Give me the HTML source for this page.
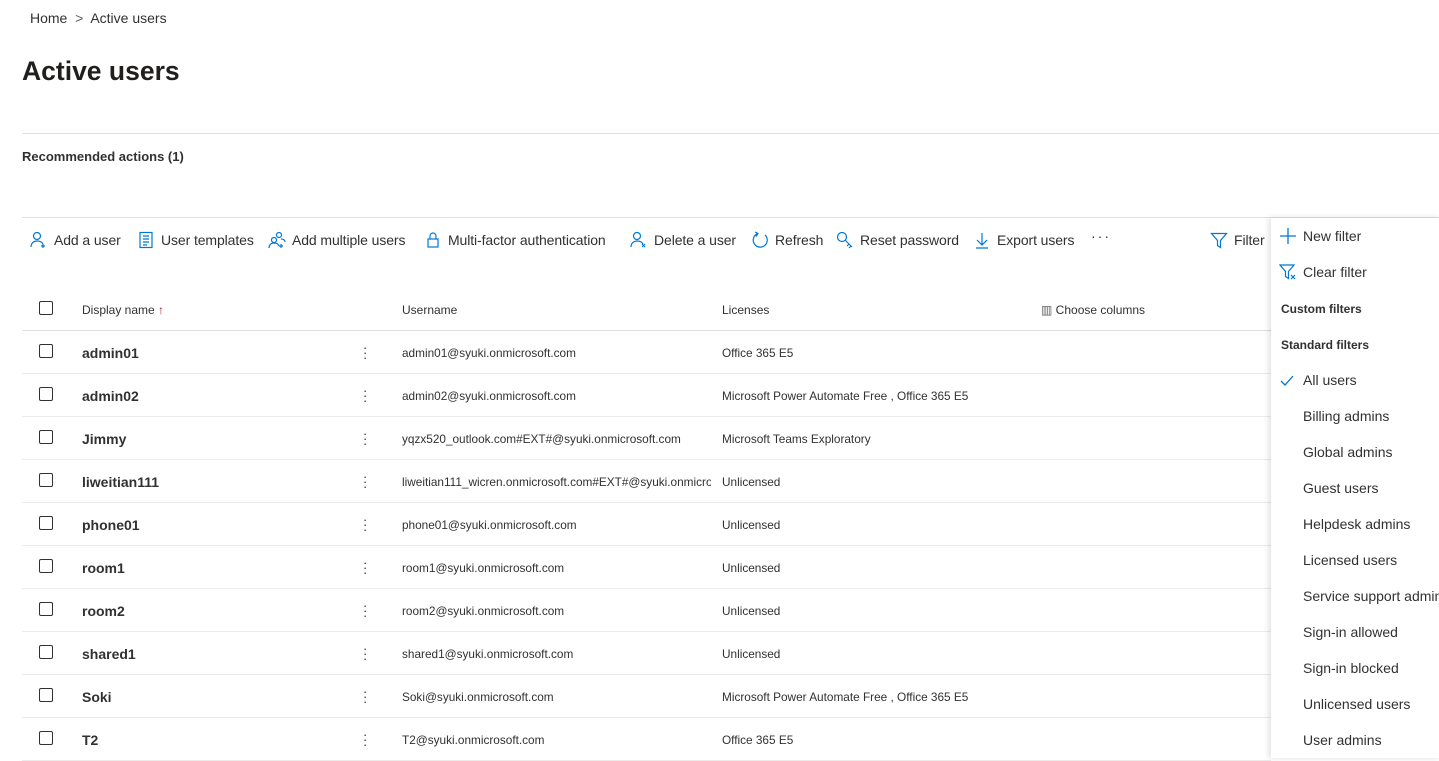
<!DOCTYPE html>
<html><head><meta charset="utf-8"><style>
*{box-sizing:border-box;margin:0;padding:0}
body{width:1439px;height:751px;overflow:hidden;background:#fff;font-family:"Liberation Sans",sans-serif;color:#323130;position:relative}
.abs{position:absolute;white-space:nowrap}
.crumb{top:10px;left:30px;font-size:14px}
h1{position:absolute;top:56px;left:22px;font-size:26.5px;font-weight:700;color:#201f1e}
.hr{position:absolute;left:22px;right:0;height:1px;background:#e1dfdd}
.tb{top:231px;font-size:14px;display:flex;align-items:center;gap:6px;letter-spacing:-0.1px}
.tb svg{width:18px;height:18px;fill:none;stroke:#0078d4;stroke-width:1.2}
.th{top:303px;font-size:12px}
.row{position:absolute;left:22px;width:1249px;height:43px;border-bottom:1px solid #edebe9}
.cb{position:absolute;left:17px;width:14px;height:14px;border:1px solid #323130;border-radius:2px}
.nm{position:absolute;left:60px;font-size:14px;font-weight:700;color:#323130}
.dots{position:absolute;left:341px;font-size:13px;line-height:5px;color:#323130}
.un{position:absolute;left:380px;font-size:11.8px;width:309px;overflow:hidden}
.lic{position:absolute;left:700px;font-size:11.8px}
.menu{position:absolute;left:1271px;top:218px;width:170px;height:540px;background:#fff;box-shadow:-2px 0 6px rgba(0,0,0,.13)}
.mi{position:absolute;left:32px;font-size:14px;color:#323130;white-space:nowrap}
.mh{position:absolute;left:10px;font-size:12px;font-weight:700;color:#323130}
</style></head><body>
<div class="abs crumb">Home &nbsp;<span style="color:#605e5c">&gt;</span>&nbsp; Active users</div>
<h1>Active users</h1>
<div class="hr" style="top:133px"></div>
<div class="abs" style="top:149px;left:22px;font-size:13px;font-weight:700">Recommended actions (1)</div>
<div class="hr" style="top:217px"></div>

<div class="abs tb" style="left:30px"><svg viewBox="0 0 18 18"><circle cx="7" cy="5" r="3.5"/><path d="M1 16c0-4 3-6 6-6s5 1 6 3M13 13v4M11 15h4"/></svg>Add a user</div>
<div class="abs tb" style="left:137px"><svg viewBox="0 0 18 18"><rect x="3" y="1.5" width="12" height="15"/><path d="M6 5h6M6 8h6M6 11h6M6 14h4"/></svg>User templates</div>
<div class="abs tb" style="left:268px"><svg viewBox="0 0 18 18"><circle cx="11" cy="4" r="2.5"/><circle cx="6" cy="9" r="2.5"/><path d="M1 17c0-3 2-5 5-5s4 1 5 3M13 13v4M11 15h4M13 8c2 0 4 1 4 3"/></svg>Add multiple users</div>
<div class="abs tb" style="left:424px"><svg viewBox="0 0 18 18"><rect x="4" y="8" width="10" height="8"/><path d="M6 8V5a3 3 0 016 0v3"/></svg>Multi-factor authentication</div>
<div class="abs tb" style="left:630px"><svg viewBox="0 0 18 18"><circle cx="7" cy="5" r="3.5"/><path d="M1 16c0-4 3-6 6-6s5 1 6 3M12 13l3 3M15 13l-3 3"/></svg>Delete a user</div>
<div class="abs tb" style="left:751px"><svg viewBox="0 0 18 18"><path d="M14 4a7 7 0 11-7-1.5M4 1l3 1.5-2 3"/></svg>Refresh</div>
<div class="abs tb" style="left:836px"><svg viewBox="0 0 18 18"><circle cx="6" cy="6" r="4.5"/><path d="M9 9l7 7M13 13l-2 2M15 15l-2 2"/></svg>Reset password</div>
<div class="abs tb" style="left:973px"><svg viewBox="0 0 18 18"><path d="M9 2v12M4 9l5 5 5-5M3 17h12"/></svg>Export users</div>
<div class="abs" style="left:1091px;top:228px;font-size:14px;letter-spacing:2px">···</div>
<div class="abs tb" style="left:1210px"><svg viewBox="0 0 18 18"><path d="M1.5 2.5h15l-6 7v7l-3-2v-5z"/></svg>Filter</div>

<div class="cb" style="top:301px;left:39px;position:absolute"></div>
<div class="abs th" style="left:82px">Display name <span style="color:#a4262c">↑</span></div>
<div class="abs th" style="left:402px">Username</div>
<div class="abs th" style="left:722px">Licenses</div>
<div class="abs th" style="left:1041px"><span style="color:#605e5c">▥</span> Choose columns</div>
<div class="hr" style="top:330px;width:1249px"></div>

<div class="row" style="top:331px"><div class="cb" style="top:13px"></div><div class="nm" style="top:14px">admin01</div><div class="dots" style="top:14px">·<br>·<br>·</div><div class="un" style="top:15px">admin01@syuki.onmicrosoft.com</div><div class="lic" style="top:15px">Office 365 E5</div></div>
<div class="row" style="top:374px"><div class="cb" style="top:13px"></div><div class="nm" style="top:14px">admin02</div><div class="dots" style="top:14px">·<br>·<br>·</div><div class="un" style="top:15px">admin02@syuki.onmicrosoft.com</div><div class="lic" style="top:15px">Microsoft Power Automate Free , Office 365 E5</div></div>
<div class="row" style="top:417px"><div class="cb" style="top:13px"></div><div class="nm" style="top:14px">Jimmy</div><div class="dots" style="top:14px">·<br>·<br>·</div><div class="un" style="top:15px">yqzx520_outlook.com#EXT#@syuki.onmicrosoft.com</div><div class="lic" style="top:15px">Microsoft Teams Exploratory</div></div>
<div class="row" style="top:460px"><div class="cb" style="top:13px"></div><div class="nm" style="top:14px">liweitian111</div><div class="dots" style="top:14px">·<br>·<br>·</div><div class="un" style="top:15px;width:309px">liweitian111_wicren.onmicrosoft.com#EXT#@syuki.onmicrosoft.com</div><div class="lic" style="top:15px">Unlicensed</div></div>
<div class="row" style="top:503px"><div class="cb" style="top:13px"></div><div class="nm" style="top:14px">phone01</div><div class="dots" style="top:14px">·<br>·<br>·</div><div class="un" style="top:15px">phone01@syuki.onmicrosoft.com</div><div class="lic" style="top:15px">Unlicensed</div></div>
<div class="row" style="top:546px"><div class="cb" style="top:13px"></div><div class="nm" style="top:14px">room1</div><div class="dots" style="top:14px">·<br>·<br>·</div><div class="un" style="top:15px">room1@syuki.onmicrosoft.com</div><div class="lic" style="top:15px">Unlicensed</div></div>
<div class="row" style="top:589px"><div class="cb" style="top:13px"></div><div class="nm" style="top:14px">room2</div><div class="dots" style="top:14px">·<br>·<br>·</div><div class="un" style="top:15px">room2@syuki.onmicrosoft.com</div><div class="lic" style="top:15px">Unlicensed</div></div>
<div class="row" style="top:632px"><div class="cb" style="top:13px"></div><div class="nm" style="top:14px">shared1</div><div class="dots" style="top:14px">·<br>·<br>·</div><div class="un" style="top:15px">shared1@syuki.onmicrosoft.com</div><div class="lic" style="top:15px">Unlicensed</div></div>
<div class="row" style="top:675px"><div class="cb" style="top:13px"></div><div class="nm" style="top:14px">Soki</div><div class="dots" style="top:14px">·<br>·<br>·</div><div class="un" style="top:15px">Soki@syuki.onmicrosoft.com</div><div class="lic" style="top:15px">Microsoft Power Automate Free , Office 365 E5</div></div>
<div class="row" style="top:718px"><div class="cb" style="top:13px"></div><div class="nm" style="top:14px">T2</div><div class="dots" style="top:14px">·<br>·<br>·</div><div class="un" style="top:15px">T2@syuki.onmicrosoft.com</div><div class="lic" style="top:15px">Office 365 E5</div></div>

<div class="menu">
<svg class="abs" style="left:8px;top:9px" width="18" height="18" viewBox="0 0 18 18"><path d="M9 1v16M1 9h16" stroke="#0078d4" stroke-width="1.3"/></svg>
<div class="mi" style="top:10px">New filter</div>
<svg class="abs" style="left:8px;top:45px" width="18" height="18" viewBox="0 0 18 18"><path d="M1 2h14l-5.5 6.5v7l-3-2V8.5z M12 12l4 4M16 12l-4 4" fill="none" stroke="#0078d4" stroke-width="1.2"/></svg>
<div class="mi" style="top:46px">Clear filter</div>
<div class="mh" style="top:84px">Custom filters</div>
<div class="mh" style="top:120px">Standard filters</div>
<svg class="abs" style="left:9px;top:157px" width="14" height="12" viewBox="0 0 14 12"><path d="M1 6l4 4 8-9" fill="none" stroke="#0078d4" stroke-width="1.3"/></svg>
<div class="mi" style="top:154px">All users</div>
<div class="mi" style="top:190px">Billing admins</div>
<div class="mi" style="top:226px">Global admins</div>
<div class="mi" style="top:262px">Guest users</div>
<div class="mi" style="top:298px">Helpdesk admins</div>
<div class="mi" style="top:334px">Licensed users</div>
<div class="mi" style="top:370px">Service support admins</div>
<div class="mi" style="top:406px">Sign-in allowed</div>
<div class="mi" style="top:442px">Sign-in blocked</div>
<div class="mi" style="top:478px">Unlicensed users</div>
<div class="mi" style="top:514px">User admins</div>
</div>
</body></html>
